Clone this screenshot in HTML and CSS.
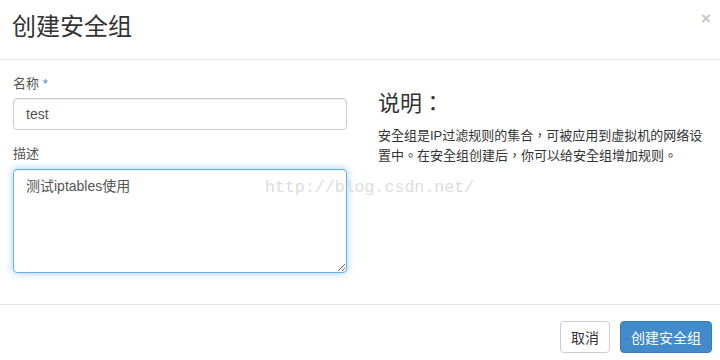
FILE: index.html
```html
<!DOCTYPE html>
<html lang="zh-CN">
<head>
    <meta charset="UTF-8">
    <title>创建安全组</title>
    <link rel="stylesheet" href="styles.css">
</head>
<body>

    <div class="modal">

        <div class="modal-header">
            <h3 class="modal-title">创建安全组</h3>
            <span class="close">&times;</span>
        </div>

        <div class="modal-body">
            <div class="left">
                <div class="form-group">
                    <label>名称 <span class="required">*</span></label>
                    <input type="text" class="form-control" value="test">
                </div>
                <div class="form-group">
                    <label>描述</label>
                    <textarea class="form-control focused">测试iptables使用</textarea>
                </div>
            </div>
            <div class="right" lang="zh-TW">
                <h3>说明：</h3>
                <p>安全组是IP过滤规则的集合，可被应用到虚拟机的网络设置中。在安全组创建后，你可以给安全组增加规则。</p>
            </div>
            <div class="watermark">http://blog.csdn.net/</div>
        </div>

        <div class="modal-footer">
            <button class="btn">取消</button>
            <button class="btn btn-primary">创建安全组</button>
        </div>

    </div>

</body>
</html>
```

FILE: styles.css
```css
body {
    margin: 0;
    background-color: #fff;
    font-family: "Liberation Sans", "Noto Sans CJK SC", sans-serif;
    color: #333;
}

.modal {
    width: 720px;
    height: 360px;
}

.modal-header {
    height: 59px;
    border-bottom: 1px solid #e5e5e5;
    display: flex;
    justify-content: space-between;
    align-items: flex-start;
    padding: 0 9px 0 12px;
}

.modal-title {
    margin: 13px 0 0;
    font-size: 24px;
    line-height: 28px;
    font-weight: normal;
    color: #333;
}

.close {
    margin-top: 9px;
    font-size: 17px;
    font-weight: bold;
    color: #c4c4c4;
    line-height: 20px;
}

.modal-body {
    position: relative;
    height: 244px;
    display: flex;
    padding: 0 0 0 13px;
}

.left {
    width: 334px;
    padding-top: 14px;
}

.form-group {
    margin-bottom: 14px;
}

label {
    display: block;
    font-size: 13px;
    line-height: 20px;
    color: #555;
    margin-bottom: 4px;
}

.form-group + .form-group label {
    margin-bottom: 5px;
}

.required {
    color: #428bca;
}

.form-control {
    display: block;
    box-sizing: border-box;
    width: 100%;
    height: 32px;
    padding: 6px 12px;
    font-family: "Liberation Sans", "Noto Sans CJK SC", sans-serif;
    font-size: 14px;
    color: #555;
    border: 1px solid #ccc;
    border-radius: 4px;
    box-shadow: inset 0 1px 1px rgba(0, 0, 0, 0.075);
    margin: 0;
}

textarea.form-control {
    height: 104px;
    resize: vertical;
    padding-top: 5px;
}

.focused {
    border-color: #66afe9;
    box-shadow: inset 0 1px 1px rgba(0, 0, 0, 0.075), 0 0 8px rgba(102, 175, 233, 0.6);
    outline: none;
}

.right {
    width: 330px;
    margin-left: 31px;
    padding-top: 31px;
    font-family: "Liberation Sans", "Noto Sans CJK TC", sans-serif;
}

.right h3 {
    margin: 0 0 9px;
    font-size: 22px;
    line-height: 26px;
    font-weight: normal;
    color: #333;
}

.right p {
    margin: 0;
    font-size: 13px;
    line-height: 20px;
    color: #333;
}

.watermark {
    position: absolute;
    left: 265px;
    top: 118px;
    font-family: "Liberation Mono", monospace;
    font-size: 16.6px;
    color: #dcdcdc;
    pointer-events: none;
}

.modal-footer {
    border-top: 1px solid #e5e5e5;
    display: flex;
    justify-content: flex-end;
    gap: 10px;
    padding: 16px 8px 0 0;
}

.btn {
    height: 32px;
    padding: 0 10px;
    font-family: "Liberation Sans", "Noto Sans CJK SC", sans-serif;
    font-size: 14px;
    color: #333;
    background-color: #fff;
    border: 1px solid #ccc;
    border-radius: 4px;
    cursor: pointer;
}

.btn-primary {
    color: #fff;
    background-color: #428bca;
    border-color: #357ebd;
}
```
